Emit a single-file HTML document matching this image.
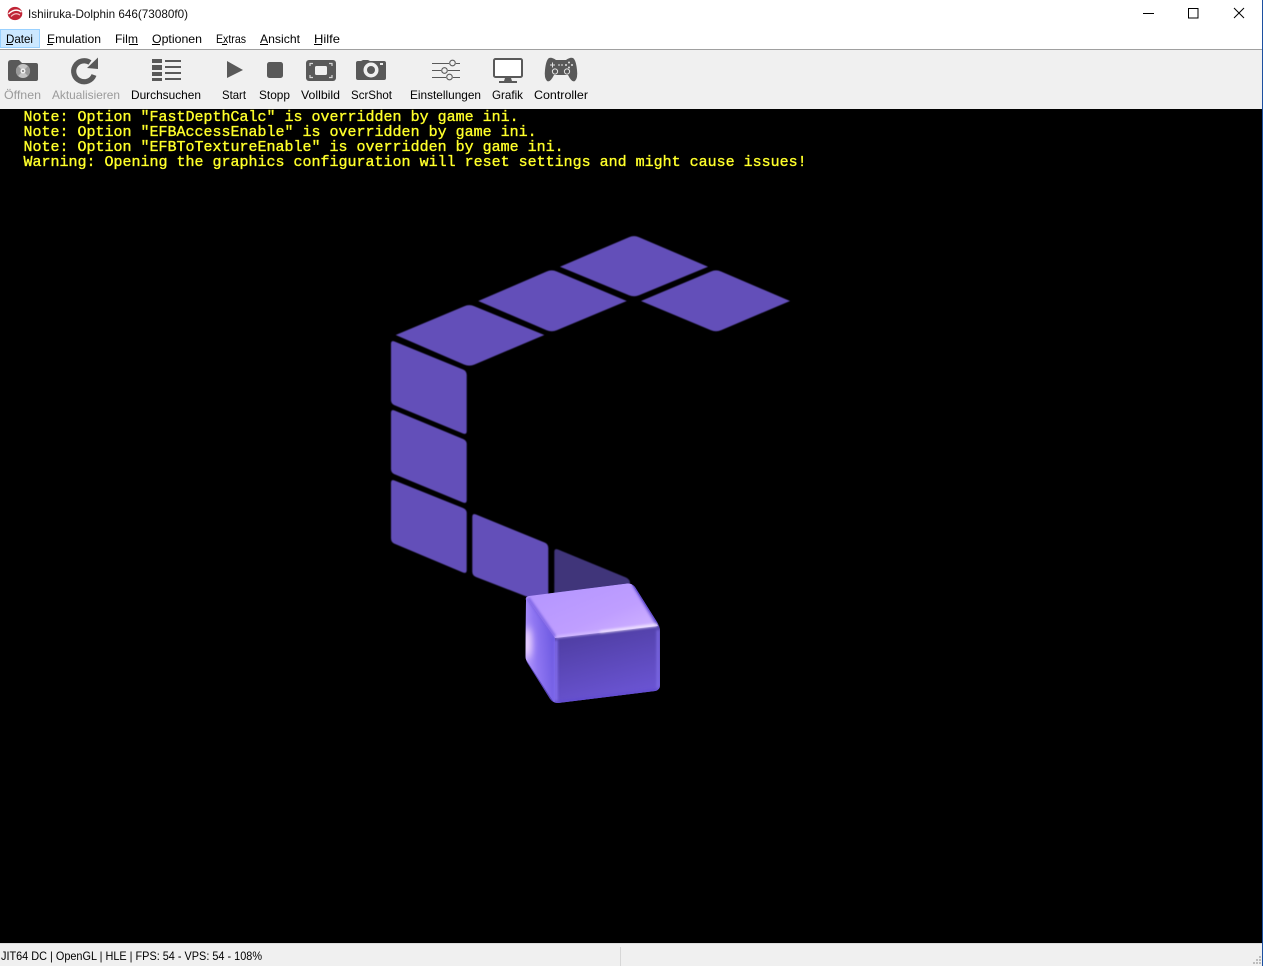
<!DOCTYPE html>
<html lang="de">
<head>
<meta charset="utf-8">
<title>Ishiiruka-Dolphin 646(73080f0)</title>
<style>
html,body{margin:0;padding:0;width:1264px;height:966px;overflow:hidden;background:#000}
svg{display:block}
.ui{font-family:"Liberation Sans",sans-serif;font-size:12px;fill:#000}
.dim{fill:#9a9a9a}
.osd{font-family:"Liberation Mono",monospace;font-size:15px;fill:#ffff2a;stroke:#ffff2a;stroke-width:.35}
.ic{fill:#595959}
.ln{stroke:#595959;fill:none}
.p{fill:#6350b9}
</style>
</head>
<body>
<svg width="1264" height="966" viewBox="0 0 1264 966" xmlns="http://www.w3.org/2000/svg">
<defs>
<filter id="b1" x="-10%" y="-10%" width="120%" height="120%"><feGaussianBlur stdDeviation=".45"/></filter>
<filter id="b2" filterUnits="userSpaceOnUse" x="510" y="570" width="170" height="150"><feGaussianBlur stdDeviation="1.3"/></filter>
<filter id="b3" filterUnits="userSpaceOnUse" x="500" y="600" width="70" height="90"><feGaussianBlur stdDeviation="4"/></filter>
<linearGradient id="top" x1="0" y1="0" x2="1" y2="1"><stop offset="0" stop-color="#b294ff"/><stop offset=".6" stop-color="#bf9eff"/><stop offset="1" stop-color="#d4b8ff"/></linearGradient>
<linearGradient id="front" x1="0" y1="0" x2=".35" y2="1"><stop offset="0" stop-color="#4a3a9b"/><stop offset="1" stop-color="#6a54d2"/></linearGradient>
<linearGradient id="left" x1="0" y1=".7" x2="1" y2=".4"><stop offset="0" stop-color="#b79cff"/><stop offset=".4" stop-color="#8f76f2"/><stop offset="1" stop-color="#6b58e0"/></linearGradient>
<clipPath id="cubeclip"><path d="M526 600 Q525 597 529 596 L627 583.500 Q632 583 635 587 L657 622 Q660 627 660 631 L660 685 Q660 690 655 691 L558 703 Q553 703 550 699 L528 664 Q525.500 660 525.500 656 Z"/></clipPath>
</defs>

<!-- window chrome -->
<rect width="1264" height="966" fill="#000"/>
<rect width="1264" height="49" fill="#fff"/>
<rect y="49" width="1264" height="1" fill="#a0a0a0"/>
<rect y="50" width="1264" height="59" fill="#f0f0f0"/>

<!-- title bar -->
<ellipse cx="15" cy="13.500" rx="7.300" ry="6.600" fill="#c02436"/>
<path d="M8.500 14 Q15 7.500 21.500 12" fill="none" stroke="#fff" stroke-width="1.400"/>
<path d="M11 16.500 Q15.500 12 20 15" fill="none" stroke="#f6c7cc" stroke-width="1.200"/>
<text class="ui" x="28" y="18" textLength="160" lengthAdjust="spacingAndGlyphs" style="fill:#111">Ishiiruka-Dolphin 646(73080f0)</text>
<rect x="1143" y="13" width="11" height="1" fill="#000"/>
<rect x="1188.500" y="8.500" width="9.500" height="9.500" fill="none" stroke="#000"/>
<path d="M1234 8 L1244 18 M1244 8 L1234 18" stroke="#000" stroke-width="1" fill="none"/>

<!-- menu bar -->
<rect x=".5" y="29.500" width="39" height="18" fill="#cce8ff" stroke="#99d1ff"/>
<text class="ui" x="6" y="43" textLength="27" lengthAdjust="spacingAndGlyphs">Datei</text>
<text class="ui" x="47" y="43" textLength="54" lengthAdjust="spacingAndGlyphs">Emulation</text>
<text class="ui" x="115" y="43" textLength="23" lengthAdjust="spacingAndGlyphs">Film</text>
<text class="ui" x="152" y="43" textLength="50" lengthAdjust="spacingAndGlyphs">Optionen</text>
<text class="ui" x="216" y="43" textLength="30" lengthAdjust="spacingAndGlyphs">Extras</text>
<text class="ui" x="260" y="43" textLength="40" lengthAdjust="spacingAndGlyphs">Ansicht</text>
<text class="ui" x="314" y="43" textLength="26" lengthAdjust="spacingAndGlyphs">Hilfe</text>
<g fill="#000">
<rect x="6" y="44" width="7" height="1"/><rect x="47" y="44" width="6" height="1"/><rect x="129" y="44" width="9" height="1"/>
<rect x="152" y="44" width="8" height="1"/><rect x="222" y="44" width="5" height="1"/><rect x="260" y="44" width="8" height="1"/>
<rect x="314" y="44" width="8" height="1"/>
</g>

<!-- toolbar icons -->
<!-- open -->
<path class="ic" d="M8 63 Q8 60 11 60 L19 60 L22 63 L36 63 Q38 63 38 65 L38 79 Q38 81 36 81 L10 81 Q8 81 8 79 Z"/>
<circle cx="23" cy="71" r="7" fill="#c4c4c4"/>
<path d="M23 71 L18 66 A7 7 0 0 0 18 76 Z M23 71 L28 76 A7 7 0 0 0 28 66 Z" fill="#9a9a9a"/>
<circle cx="23" cy="71" r="2.500" fill="#f2f2f2"/><circle cx="23" cy="71" r="1" fill="#777"/>
<!-- refresh -->
<path class="ln" stroke-width="5.200" d="M94 75 A10.500 10.500 0 1 1 90 62.500"/>
<path class="ic" d="M87 68 L98 57.500 L98 69 Z"/>
<!-- list -->
<g class="ic">
<rect x="152" y="59" width="10" height="4"/><rect x="152" y="65" width="10" height="5"/><rect x="152" y="72" width="10" height="4"/><rect x="152" y="78" width="10" height="3"/>
<rect x="165" y="60" width="16" height="2"/><rect x="165" y="66" width="16" height="2"/><rect x="165" y="72" width="16" height="2"/><rect x="165" y="78" width="16" height="2"/>
</g>
<!-- play / stop -->
<path class="ic" d="M227 61 L243 70 L227 78 Z"/>
<rect class="ic" x="267" y="62" width="16" height="16" rx="2.500"/>
<!-- fullscreen -->
<rect class="ic" x="306" y="60" width="30" height="21" rx="3"/>
<rect x="315" y="66" width="12" height="9" rx="1.500" fill="#efefef"/>
<path d="M310 66 V63.500 H313 M332 66 V63.500 H329 M310 75 V77.500 H313 M332 75 V77.500 H329" stroke="#d8d8d8" stroke-width="1.200" fill="none"/>
<!-- camera -->
<path class="ic" d="M356 63 Q356 61 358 61 L361 61 L363 60 L368 60 L370 61 L384 61 Q386 61 386 63 L386 78 Q386 80 384 80 L358 80 Q356 80 356 78 Z"/>
<circle cx="371" cy="70" r="7.500" fill="#f0f0f0"/><circle cx="371" cy="70" r="4" fill="#595959"/>
<rect x="380" y="63" width="3" height="2" fill="#efefef"/>
<!-- settings -->
<g class="ln" stroke-width="1.100">
<path d="M432 63.500 H449 M456 63.500 H460 M432 70.500 H441 M448 70.500 H460 M432 77.500 H446 M453 77.500 H460"/>
<circle cx="452.500" cy="63" r="2.800"/><circle cx="444.500" cy="70.500" r="2.800"/><circle cx="449.500" cy="77" r="2.800"/>
</g>
<!-- monitor -->
<rect x="494" y="59" width="28" height="18" rx="1.500" fill="#fff" stroke="#595959" stroke-width="2"/>
<path class="ic" d="M505 78 H511 L512 81 H517 V83 H499 V81 H504 Z"/>
<!-- controller -->
<path class="ic" d="M549 58 Q552 57 556 60 H566 Q570 57 573 58 Q576 60 577 70 Q578 78 575 81 Q572 83 568 75 H554 Q550 83 547 81 Q544 78 545 70 Q546 60 549 58 Z"/>
<g fill="none" stroke="#e4e4e4" stroke-width="1">
<path d="M550 65 H555 M552.500 62.500 V67.500"/><circle cx="555" cy="71.500" r="2.600"/><circle cx="567" cy="71.500" r="2.600"/>
</g>
<g fill="#e4e4e4"><circle cx="569" cy="62.500" r="1"/><circle cx="572" cy="65" r="1"/><circle cx="566" cy="65" r="1"/><circle cx="569" cy="67.500" r="1"/><rect x="558" y="64.500" width="2" height="1"/><rect x="561" y="64.500" width="2" height="1"/></g>

<!-- toolbar labels -->
<text class="ui dim" x="4" y="99" textLength="37" lengthAdjust="spacingAndGlyphs">Öffnen</text>
<text class="ui dim" x="52" y="99" textLength="68" lengthAdjust="spacingAndGlyphs">Aktualisieren</text>
<text class="ui" x="131" y="99" textLength="70" lengthAdjust="spacingAndGlyphs">Durchsuchen</text>
<text class="ui" x="222" y="99" textLength="24" lengthAdjust="spacingAndGlyphs">Start</text>
<text class="ui" x="259" y="99" textLength="31" lengthAdjust="spacingAndGlyphs">Stopp</text>
<text class="ui" x="301" y="99" textLength="39" lengthAdjust="spacingAndGlyphs">Vollbild</text>
<text class="ui" x="351" y="99" textLength="41" lengthAdjust="spacingAndGlyphs">ScrShot</text>
<text class="ui" x="410" y="99" textLength="71" lengthAdjust="spacingAndGlyphs">Einstellungen</text>
<text class="ui" x="492" y="99" textLength="31" lengthAdjust="spacingAndGlyphs">Grafik</text>
<text class="ui" x="534" y="99" textLength="54" lengthAdjust="spacingAndGlyphs">Controller</text>

<!-- OSD messages -->
<text class="osd" x="23.500" y="121">Note: Option "FastDepthCalc" is overridden by game ini.</text>
<text class="osd" x="23.500" y="136">Note: Option "EFBAccessEnable" is overridden by game ini.</text>
<text class="osd" x="23.500" y="151">Note: Option "EFBToTextureEnable" is overridden by game ini.</text>
<text class="osd" x="23.500" y="166">Warning: Opening the graphics configuration will reset settings and might cause issues!</text>

<!-- logo panels -->
<g filter="url(#b1)">
<path class="p" d="M560 266.700 L629 237.200 Q634 235 639 237.200 L708 266.700 L639 295.200 Q634 297.300 629 295.200 Z"/>
<path class="p" d="M478.300 301 L546.700 271.500 Q551.700 269.300 556.700 271.500 L626.700 301 L556.700 330.200 Q551.700 332.300 546.700 330.200 Z"/>
<path class="p" d="M395.700 335 L464.300 306.200 Q469.300 304 474.300 306.200 L544.300 335 L474.300 364.600 Q469.300 366.700 464.300 364.600 Z"/>
<path class="p" d="M641 301 L711 271.500 Q716 269.300 721 271.500 L790 301 L721 330.200 Q716 332.300 711 330.200 Z"/>
<path class="p" d="M391 344 Q391 340 394.500 341.500 L463 369.500 Q466.700 371 466.700 375 L466.700 431 Q466.700 435 463 433.500 L394 405 Q391 403.500 391 400 Z"/>
<path class="p" d="M391 413 Q391 409 394.500 410.500 L463 439 Q466.700 440.500 466.700 444 L466.700 500 Q466.700 504 463 502.500 L394 474 Q391 472.500 391 469 Z"/>
<path class="p" d="M391 483 Q391 479 394.500 480.500 L463 508 Q466.700 509.500 466.700 513 L466.700 570 Q466.700 574 463 572.500 L394 543.500 Q391 542 391 538 Z"/>
<path class="p" d="M472.300 517 Q472.300 513 476 514.500 L544.500 542.500 Q548.300 544 548.300 548 L548.300 605 L476 577 Q472.300 575.500 472.300 571.500 Z"/>
<path fill="#40347a" d="M554.300 552 Q554.300 548 558 549.500 L626 577.500 Q630 579.500 630 583 L630 600 L554.300 600 Z"/>
</g>

<!-- cube -->
<g clip-path="url(#cubeclip)">
<rect x="520" y="580" width="145" height="125" fill="#5a47b8"/>
<polygon points="525,596 555,638 555,704 525,658" fill="url(#left)"/>
<polygon points="555,638 660,626 660,692 555,704" fill="url(#front)"/>
<polygon points="525,596 631,583 658,626 555,638" fill="url(#top)"/>
<g filter="url(#b2)">
<path d="M600 632 L657 625" stroke="#f6ecff" stroke-width="2.500" fill="none"/>
<path d="M556 637 L600 632" stroke="#d8c2ff" stroke-width="2" fill="none"/>
<path d="M528 598 L555 637" stroke="#7a62e4" stroke-width="3" fill="none"/>
<path d="M633 584 L657 624" stroke="#6f58da" stroke-width="3" fill="none"/>
<path d="M556 640 L556 701" stroke="#8470f0" stroke-width="3" fill="none"/>
<path d="M658 630 L658 688" stroke="#7d6ae6" stroke-width="2.500" fill="none"/>
<path d="M556 702 L657 690" stroke="#5f48cf" stroke-width="2" fill="none"/>
</g>
<ellipse cx="527" cy="643" rx="4" ry="16" fill="#ffe6ff" filter="url(#b3)"/>
</g>

<!-- status bar -->
<rect y="943" width="1264" height="23" fill="#f0f0f0"/>
<rect y="943" width="1264" height="1" fill="#dcdcdc"/>
<rect x="620" y="947" width="1" height="19" fill="#d7d7d7"/>
<text class="ui" x="1" y="960" textLength="261" lengthAdjust="spacingAndGlyphs">JIT64 DC | OpenGL | HLE | FPS: 54 - VPS: 54 - 108%</text>
<g fill="#bdbdbd">
<rect x="1259" y="956" width="2" height="2"/><rect x="1256" y="959" width="2" height="2"/><rect x="1259" y="959" width="2" height="2"/>
<rect x="1253" y="962" width="2" height="2"/><rect x="1256" y="962" width="2" height="2"/><rect x="1259" y="962" width="2" height="2"/>
</g>

<!-- window border -->
<rect x="1262" y="0" width="1" height="966" fill="#1c50a0"/>
<rect x="1263" y="0" width="1" height="966" fill="#fff"/>
</svg>
</body>
</html>
